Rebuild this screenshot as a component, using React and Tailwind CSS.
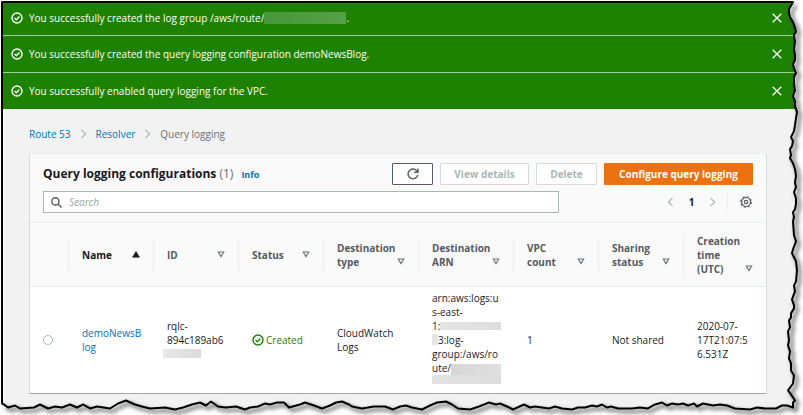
import React from "react";

const messages = [
  { text: "You successfully created the log group /aws/route/", redacted: true },
  { text: "You successfully created the query logging configuration demoNewsBlog." },
  { text: "You successfully enabled query logging for the VPC." },
];

const columns = [
  { lines: ["Name"], width: "w-[85px]", sorted: true },
  { lines: ["ID"], width: "w-[85px]" },
  { lines: ["Status"], width: "w-[85px]" },
  { lines: ["Destination", "type"], width: "w-[95px]" },
  { lines: ["Destination", "ARN"], width: "w-[95px]" },
  { lines: ["VPC", "count"], width: "w-[85px]" },
  { lines: ["Sharing", "status"], width: "w-[85px]" },
  { lines: ["Creation", "time", "(UTC)"], width: "w-[83px]" },
];

function CheckCircle({ className }) {
  return (
    <svg className={className} viewBox="0 0 12 12" fill="none" stroke="currentColor" strokeWidth="1.4" aria-hidden="true">
      <circle cx="6" cy="6" r="5" />
      <path d="M3.6 6.1 5.3 7.7 8.4 4.6" />
    </svg>
  );
}

function Chevron({ className, left }) {
  return (
    <svg className={className} viewBox="0 0 8 12" fill="none" stroke="currentColor" strokeWidth="1.4" aria-hidden="true">
      <path d={left ? "M6.5 1 1.5 6l5 5" : "M1.5 1l5 5-5 5"} />
    </svg>
  );
}

function SortMark({ sorted }) {
  return (
    <svg className="mb-1 h-[7px] w-[8px] shrink-0" viewBox="0 0 8 7" aria-hidden="true">
      {sorted ? (
        <path d="M4 0 8 6.6H0Z" fill="#16191f" />
      ) : (
        <path d="M1.3 1h5.4L4 5.6Z" fill="none" stroke="#687078" strokeWidth="1.1" />
      )}
    </svg>
  );
}

const tear =
  "793,2 792,4 789,9 789,13 790,17 793,22 795,27 796,32 794,35 795,42 794,49 795,55 795,60 793,64 794,68 796,73 794,77 794,84 795,90 793,96 795,101 795,106 797,112 796,118 795,125 794,131 791,137 793,141 792,146 790,149 791,155 790,158 793,163 795,169 796,176 795,182 796,187 794,192 796,198 796,204 795,209 793,212 794,217 793,221 794,235 796,241 793,249 792,253 796,261 797,270 796,281 794,285 795,291 792,299 794,305 794,308 791,313 791,317 789,320 790,327 788,331 789,340 788,345 790,351 789,358 791,363 791,370 794,375 793,383 788,390 791,394 795,400 793,402 793,407 787,405 782,405 776,408 765,408 757,407 750,409 735,408 727,405 720,404 713,405 703,403 697,406 694,403 688,405 683,403 678,404 672,403 667,405 662,402 655,404 648,408 640,407 632,408 618,408 611,406 607,407 602,404 597,406 592,405 585,407 578,407 572,409 562,408 555,406 549,408 542,407 535,406 530,407 524,404 513,409 507,406 500,403 496,404 489,402 484,404 479,406 470,409 458,408 452,404 446,401 437,402 430,405 422,409 412,407 406,405 400,406 393,409 385,406 374,406 362,408 352,406 349,404 342,401 336,402 330,405 322,408 314,405 305,402 300,404 289,407 284,402 277,402 270,404 265,403 258,406 250,407 245,409 236,406 226,407 218,406 211,401 206,405 200,402 192,404 183,407 175,409 165,407 150,408 142,406 135,404 126,400 118,403 110,408 97,406 90,408 83,404 77,407 70,404 62,407 55,406 48,408 40,404 34,407 20,408 15,405 8,407 4,404 2,403";

function TornFrame() {
  return (
    <svg
      className="pointer-events-none absolute inset-0 h-full w-full"
      viewBox="0 0 803 415"
      preserveAspectRatio="none"
      aria-hidden="true"
    >
      <defs>
        <filter id="soft" x="-5%" y="-5%" width="110%" height="110%">
          <feGaussianBlur stdDeviation="2" />
        </filter>
      </defs>
      <path d={`M0 0H803V415H0Z M2 2L${tear.split(" ").join("L")}Z`} fillRule="evenodd" fill="#fff" />
      <polyline points={tear} transform="translate(3 3)" fill="none" stroke="#000" strokeOpacity="0.6" strokeWidth="3" filter="url(#soft)" />
      <polygon points={`2,2 ${tear}`} fill="none" stroke="#000" strokeWidth="2" strokeLinejoin="round" />
    </svg>
  );
}

export default function App() {
  return (
    <div className="relative min-h-screen overflow-hidden bg-[#f2f2f2] font-['Open_Sans','Noto_Sans',sans-serif] text-[10px] leading-[14px] text-[#16191f]">
      <section aria-label="Notifications" className="bg-[#1d8102] text-white">
        {messages.map((m) => (
          <div
            key={m.text}
            className="flex h-[37px] items-center border-b border-[#a5cd9a] pr-5 pl-[11px] first:h-9 last:h-9 last:border-b-0"
          >
            <CheckCircle className="mr-[6px] h-3 w-3 shrink-0" />
            <p className="flex flex-1 items-center">
              {m.text}
              {m.redacted && (
                <>
                  <span className="h-3 w-[82px] bg-linear-to-r from-[#46963a] to-[#58a04c]" />.
                </>
              )}
            </p>
            <button type="button" aria-label="Dismiss" className="p-px">
              <svg className="h-[10px] w-[10px]" viewBox="0 0 10 10" stroke="#fff" strokeWidth="1.3" aria-hidden="true">
                <path d="M.7.7 9.3 9.3M9.3.7.7 9.3" />
              </svg>
            </button>
          </div>
        ))}
      </section>

      <main className="pt-[18px] pr-9 pb-[22px] pl-[29px]">
        <nav aria-label="Breadcrumb" className="flex items-center gap-[9px] text-[#687078]">
          <a href="#route53" className="text-[#0073bb]">Route 53</a>
          <Chevron className="h-[10px] w-[7px] text-[#aab7b8]" />
          <a href="#resolver" className="text-[#0073bb]">Resolver</a>
          <Chevron className="h-[10px] w-[7px] text-[#aab7b8]" />
          <span>Query logging</span>
        </nav>

        <div className="mt-3 border border-t-[#eaeded] border-r-[#d5dbdb] border-b-[#a3a6a8] border-l-[#d5dbdb] bg-white">
          <div className="bg-[#fafafa] px-[13px] pt-[9px] pb-[9px]">
            <div className="flex items-center font-bold">
              <h1 className="text-[12px] leading-[18px]">
                Query logging configurations <span className="font-normal text-[#687078]">(1)</span>
              </h1>
              <a href="#info" className="ml-2 pt-[2px] text-[9px] text-[#0073bb]">Info</a>
              <div className="ml-auto flex gap-[7px]">
                <button type="button" aria-label="Refresh" className="flex h-[22px] w-[41px] items-center justify-center rounded-[1px] border border-[#545b64] bg-white text-[#545b64]">
                  <svg className="h-3 w-3" viewBox="0 0 12 12" fill="none" stroke="currentColor" strokeWidth="1.4" aria-hidden="true">
                    <path d="M10.8 6.8A4.9 4.9 0 1 1 9.6 2.6L11 4M11 .4V4.2H7.2" />
                  </svg>
                </button>
                <button type="button" disabled className="h-[22px] w-[89px] rounded-[1px] border border-[#d5dbdb] bg-white text-[#aab7b8]">View details</button>
                <button type="button" disabled className="h-[22px] w-[61px] rounded-[1px] border border-[#d5dbdb] bg-white text-[#aab7b8]">Delete</button>
                <button type="button" className="h-[22px] w-[149px] rounded-[1px] bg-[#ec7211] text-white">Configure query logging</button>
              </div>
            </div>

            <div className="mt-[6px] flex items-center">
              <label className="flex h-[22px] w-8/11 items-center gap-[7px] border border-[#aab7b8] bg-white pl-[7px]">
                <svg className="h-[11px] w-[11px] shrink-0" viewBox="0 0 11 11" fill="none" stroke="#545b64" strokeWidth="1.4" aria-hidden="true">
                  <circle cx="4.4" cy="4.4" r="3.6" />
                  <path d="M7 7l3.6 3.6" />
                </svg>
                <input type="text" aria-label="Search" placeholder="Search" className="w-full bg-transparent outline-none placeholder:text-[#95a5a6] placeholder:italic" />
              </label>
              <div className="ml-auto flex items-center pr-px">
                <button type="button" aria-label="Previous page"><Chevron left className="h-[10px] w-[7px] text-[#aab7b8]" /></button>
                <span className="w-[35px] text-center font-bold">1</span>
                <button type="button" aria-label="Next page"><Chevron className="h-[10px] w-[7px] text-[#aab7b8]" /></button>
                <span className="ml-[11px] h-4 w-px bg-[#eaeded]" />
                <button type="button" aria-label="Preferences" className="ml-3">
                  <svg className="h-3 w-3" viewBox="0 0 12 12" fill="none" stroke="#545b64" aria-hidden="true">
                    <circle cx="6" cy="6" r="4.5" strokeWidth="1.2" />
                    <circle cx="6" cy="6" r="5.3" strokeWidth="1.2" strokeDasharray="2.08 2.08" />
                    <circle cx="6" cy="6" r="1.7" strokeWidth="1.2" />
                  </svg>
                </button>
              </div>
            </div>
          </div>

          <table className="w-full table-fixed border-collapse text-left">
            <thead className="bg-[#fafafa] text-[#545b64]">
              <tr className="h-16 border-y border-[#eaeded]">
                <th className="w-[38px]" aria-label="Select" />
                {columns.map((c) => (
                  <th key={c.lines.join(" ")} scope="col" className={`${c.width} p-0`} aria-sort={c.sorted ? "ascending" : undefined}>
                    <div className="flex min-h-8 items-center border-l border-[#eaeded] px-[13px]">
                      <button type="button" className="flex w-full items-end justify-between text-left">
                        <span className={c.sorted ? "text-[#16191f]" : ""}>
                          {c.lines.map((l) => (
                            <span key={l} className="block">{l}</span>
                          ))}
                        </span>
                        <SortMark sorted={c.sorted} />
                      </button>
                    </div>
                  </th>
                ))}
              </tr>
            </thead>
            <tbody>
              <tr className="h-[106px]">
                <td className="p-0">
                  <input type="radio" aria-label="Select demoNewsBlog" className="ml-[13px] block h-[10px] w-[10px] appearance-none rounded-full border border-[#aab7b8] bg-white" />
                </td>
                <td className="p-0 pl-[14px]">
                  <a href="#demo" className="text-[#0073bb]">demoNewsB<br />log</a>
                </td>
                <td className="p-0 pl-[14px]">
                  rqlc-<br />894c189ab6
                  <span className="-ml-1 flex h-[14px] items-center"><span className="h-[9px] w-[38px] bg-linear-to-r from-[#e9e9e9] to-[#dadada]" /></span>
                </td>
                <td className="p-0 pl-[14px]">
                  <span className="flex items-center gap-[2px] text-[#1d8102]">
                    <CheckCircle className="h-3 w-3" />
                    Created
                  </span>
                </td>
                <td className="p-0 pl-[14px]">CloudWatch<br />Logs</td>
                <td className="p-0 pl-[14px]">
                  arn:aws:logs:u<br />s-east-
                  <span className="flex items-center">1:<span className="h-2 w-[61px] bg-linear-to-r from-[#e4e4e4] to-[#dddddd]" /></span>
                  <span className="flex items-center"><span className="h-[11px] w-[6px] bg-[#e6e6e6]" />3:log-</span>
                  group:/aws/ro
                  <span className="flex h-[14px] w-[69px] items-end">ute/<span className="h-[11px] flex-1 bg-linear-to-r from-[#d6d6d6] to-[#e0e0e0]" /></span>
                  <span className="flex h-[14px] items-start"><span className="h-[9px] w-[69px] bg-linear-to-r from-[#e2e2e2] to-[#dcdcdc]" /></span>
                </td>
                <td className="p-0 pl-[14px]">1</td>
                <td className="p-0 pl-[14px]">Not shared</td>
                <td className="p-0 pl-[14px]">2020-07-<br />17T21:07:5<br />6.531Z</td>
              </tr>
            </tbody>
          </table>
        </div>
      </main>
      <TornFrame />
    </div>
  );
}
